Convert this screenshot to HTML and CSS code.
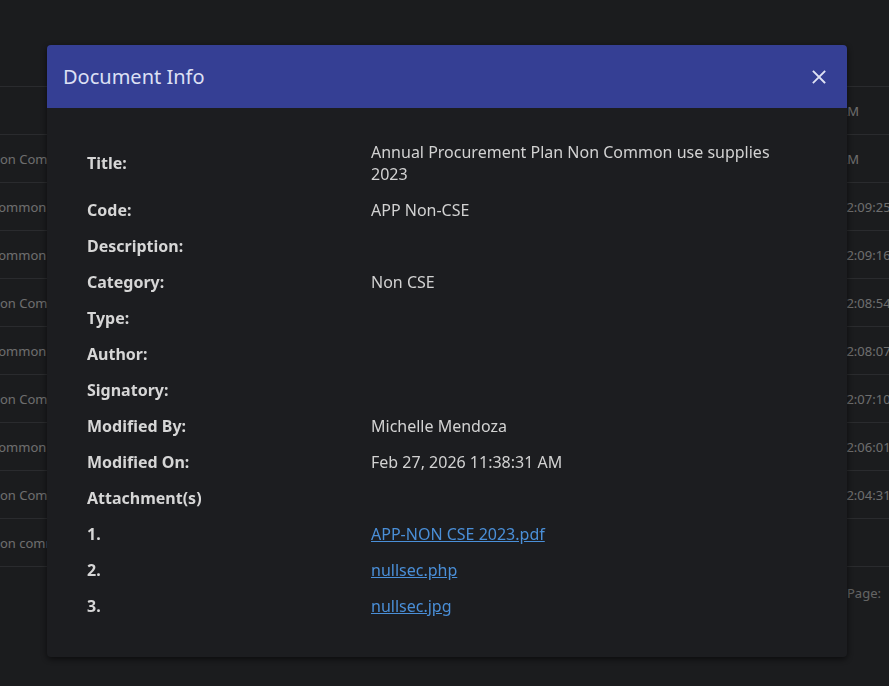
FILE: index.html
```html
<!DOCTYPE html>
<html>
<head>
  <title>Documents</title>
  <link rel="stylesheet" href="styles.css">
</head>
<body>
  <div class="page">
    <div class="toolbar"></div>
    <div class="doc-table">
      <div class="doc-row"><span class="cell-name"></span><span class="cell-date">AM</span></div>
      <div class="doc-row"><span class="cell-name">Non Common use supplies</span><span class="cell-date">AM</span></div>
      <div class="doc-row"><span class="cell-name">Common use supplies</span><span class="cell-date">12:09:25 PM</span></div>
      <div class="doc-row"><span class="cell-name">Common use supplies</span><span class="cell-date">12:09:16 PM</span></div>
      <div class="doc-row"><span class="cell-name">Non Common use supplies</span><span class="cell-date">12:08:54 PM</span></div>
      <div class="doc-row"><span class="cell-name">Common use supplies</span><span class="cell-date">12:08:07 PM</span></div>
      <div class="doc-row"><span class="cell-name">Non Common use supplies</span><span class="cell-date">12:07:10 PM</span></div>
      <div class="doc-row"><span class="cell-name">Common use supplies</span><span class="cell-date">12:06:01 PM</span></div>
      <div class="doc-row"><span class="cell-name">Non Common use supplies</span><span class="cell-date">12:04:31 PM</span></div>
      <div class="doc-row"><span class="cell-name">Non common use supplies</span><span class="cell-date"></span></div>
    </div>
    <div class="pager"><span class="pager-label">Page:</span></div>
  </div>

  <div id="docModal" class="modal">
    <div class="modal-content">
      <div class="modal-header">
        <h2>Document Info</h2>
        <button class="close-btn" onclick="closeModal()">
          <svg width="16" height="16" viewBox="0 0 16 16"><path d="M2.5 2.5 L13.5 13.5 M13.5 2.5 L2.5 13.5" stroke="#dfe2f4" stroke-width="1.8" stroke-linecap="square"/></svg>
        </button>
      </div>
      <div class="modal-body">
        <div class="info-row"><span class="label">Title:</span><span class="value">Annual Procurement Plan Non Common use supplies 2023</span></div>
        <div class="info-row"><span class="label">Code:</span><span class="value">APP Non-CSE</span></div>
        <div class="info-row"><span class="label">Description:</span><span class="value"></span></div>
        <div class="info-row"><span class="label">Category:</span><span class="value">Non CSE</span></div>
        <div class="info-row"><span class="label">Type:</span><span class="value"></span></div>
        <div class="info-row"><span class="label">Author:</span><span class="value"></span></div>
        <div class="info-row"><span class="label">Signatory:</span><span class="value"></span></div>
        <div class="info-row"><span class="label">Modified By:</span><span class="value">Michelle Mendoza</span></div>
        <div class="info-row"><span class="label">Modified On:</span><span class="value">Feb 27, 2026 11:38:31 AM</span></div>
        <div class="info-row"><span class="label">Attachment(s)</span><span class="value"></span></div>
        <div class="info-row"><span class="label">1.</span><span class="value"><a href="#">APP-NON CSE 2023.pdf</a></span></div>
        <div class="info-row"><span class="label">2.</span><span class="value"><a href="#">nullsec.php</a></span></div>
        <div class="info-row"><span class="label">3.</span><span class="value"><a href="#">nullsec.jpg</a></span></div>
      </div>
    </div>
  </div>

  <script>
    function closeModal() {
      document.getElementById("docModal").style.display = "none";
    }
  </script>
</body>
</html>
```

FILE: styles.css
```css
/* Page behind the modal */
body {
  margin: 0;
  background-color: #36383c;
  font-family: "Noto Sans", "Open Sans", sans-serif;
  overflow: hidden;
}

.page {
  height: 686px;
}

.toolbar {
  height: 86px;
}

.doc-row {
  display: flex;
  justify-content: space-between;
  align-items: center;
  height: 47px;
  border-top: 1px solid #55575c;
  font-size: 13px;
  color: #dcdcdc;
}

.doc-row:last-child {
  border-bottom: 1px solid #55575c;
}

.cell-name {
  margin-left: -10px;
  white-space: nowrap;
}

.cell-date {
  width: 50px;
  flex: none;
  white-space: nowrap;
  overflow: hidden;
}

.pager {
  display: flex;
  justify-content: flex-end;
  padding-top: 17px;
  font-size: 13px;
  color: #c8c8c8;
}

.pager-label {
  width: 42px;
}

/* Modal */
.modal {
  position: fixed;
  z-index: 1;
  left: 0;
  top: 0;
  width: 100%;
  height: 100%;
  background-color: rgba(0, 0, 0, 0.5);
}

.modal-content {
  width: 800px;
  margin: 45px 0 0 47px;
  background-color: #1c1d20;
  border-radius: 4px;
  box-shadow: 0 2px 6px rgba(0, 0, 0, 0.6);
}

.modal-header {
  display: flex;
  justify-content: space-between;
  align-items: center;
  height: 63px;
  padding: 0 20px 0 16px;
  background-color: #353f94;
  border-radius: 4px 4px 0 0;
}

.modal-header h2 {
  margin: 0;
  font-size: 20px;
  font-weight: normal;
  color: #dde0f4;
}

.close-btn {
  border: none;
  background: none;
  padding: 0;
  display: flex;
  cursor: pointer;
}

.modal-body {
  padding: 26px 40px 33px;
}

.info-row {
  display: grid;
  grid-template-columns: 284px 1fr;
  align-items: center;
  padding: 7px 0;
  font-size: 16px;
  line-height: 22px;
  min-height: 22px;
}

.label {
  font-weight: bold;
  color: #d6d6d6;
}

.value {
  color: #d2d2d2;
}

.value a {
  color: #4a8fd8;
}
```
